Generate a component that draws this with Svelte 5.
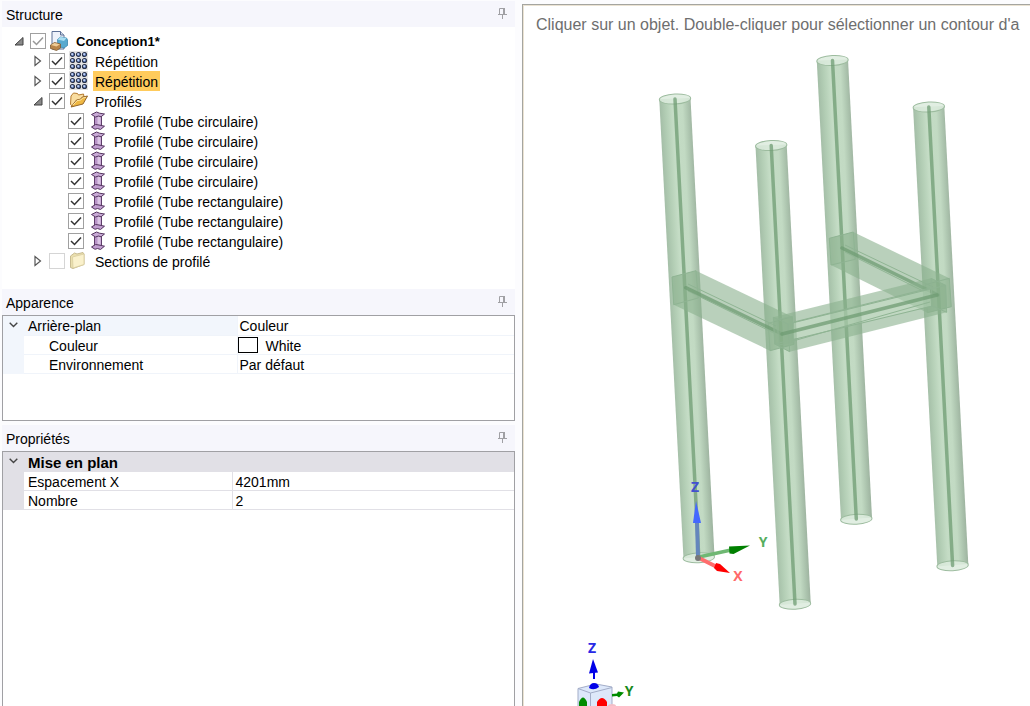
<script lang="ts">
  type IconName = "design" | "pattern" | "folder" | "beam" | "folder-closed";

  interface TreeNode {
    id: string;
    label: string;
    icon: IconName;
    depth: number;
    state?: "open" | "closed";
    checked: boolean;
    look?: "partial" | "off";
  }

  interface Property {
    name: string;
    value: string;
    swatch?: string;
  }

  const profiles = [
    "Profilé (Tube circulaire)",
    "Profilé (Tube circulaire)",
    "Profilé (Tube circulaire)",
    "Profilé (Tube circulaire)",
    "Profilé (Tube rectangulaire)",
    "Profilé (Tube rectangulaire)",
    "Profilé (Tube rectangulaire)",
  ];

  let nodes = $state<TreeNode[]>([
    { id: "root", label: "Conception1*", icon: "design", depth: 0, state: "open", checked: true, look: "partial" },
    { id: "rep1", label: "Répétition", icon: "pattern", depth: 1, state: "closed", checked: true },
    { id: "rep2", label: "Répétition", icon: "pattern", depth: 1, state: "closed", checked: true },
    { id: "profiles", label: "Profilés", icon: "folder", depth: 1, state: "open", checked: true },
    ...profiles.map((label, i): TreeNode => ({ id: `p${i}`, label, icon: "beam", depth: 2, checked: true })),
    { id: "sections", label: "Sections de profilé", icon: "folder-closed", depth: 1, state: "closed", checked: false, look: "off" },
  ]);

  let selected = $state("rep2");

  const visible = $derived(
    nodes.filter((node, i) => {
      if (node.depth === 0) return true;
      for (let d = node.depth - 1, j = i; d >= 0; d--) {
        while (nodes[j].depth !== d) j--;
        if (nodes[j].state === "closed") return false;
      }
      return true;
    }),
  );

  function toggle(node: TreeNode) {
    node.state = node.state === "open" ? "closed" : "open";
  }

  const appearance: Property[] = [
    { name: "Couleur", value: "White", swatch: "white" },
    { name: "Environnement", value: "Par défaut" },
  ];

  const properties: Property[] = [
    { name: "Espacement X", value: "4201mm" },
    { name: "Nombre", value: "2" },
  ];

  // Top centre of each circular tube, back to front
  const tubes = [
    [832.5, 60.5],
    [928.8, 107],
    [675, 99],
    [771.2, 145.5],
  ];

  // Rectangular tubes: near face, far face and neutral axis
  const beams = [
    {
      outline: "829.3,238.3 853.3,232 949.3,278.3 951.3,306.7 927.3,312.7 831,265",
      faces: ["829.3,238.3 853.3,232 855.3,259.3 831,265", "949.3,278.3 951.3,306.7 927.3,312.7 925.3,284.7"],
      edges: "M845 245 933 287M845 252 931 295",
      axis: "M842 248 938 295",
    },
    {
      outline: "672,277 696,270.7 792.3,316.7 794,344.3 770,350.7 673.7,304.7",
      faces: ["672,277 696,270.7 698.3,298 673.7,304.7", "792.3,316.7 794,344.3 770,350.7 768.3,323.3"],
      edges: "M688 284 776 326M688 291 774 333",
      axis: "M685.7 287.7 782 334",
    },
    {
      outline: "773.3,317.3 931,278.3 945.7,285.3 946.7,312.3 789.7,351.7 774.7,344",
      faces: ["773.3,317.3 788,324 789.7,351.7 774.7,344", "931,278.3 945.7,285.3 946.7,312.3 932.3,306", "777,319.5 792,316.8 793.5,342 779,345"],
      edges: "M788 324 945.7 285.3M774.7 344 932.3 306M794 322 930 288M793 341 930 302",
      axis: "M782 334 937 295",
      light: "794,323 930,289 931,306 793,339",
    },
  ];
</script>

{#snippet pin()}
  <button class="pin" aria-label="Épingler">
    <svg width="9" height="11" viewBox="0 0 9 11" aria-hidden="true">
      <path d="M1.5 6V.5h5V6M0 6.5h9M4.5 7v4" fill="none" stroke="#a0a0a4" />
      <path d="M5 0h2v6H5z" fill="#a0a0a4" />
    </svg>
  </button>
{/snippet}

{#snippet chevron()}
  <svg class="chevron" width="9" height="6" viewBox="0 0 9 6" aria-hidden="true">
    <path d="M.7.8 4.5 4.5 8.3.8" fill="none" stroke="#444" stroke-width="1.4" />
  </svg>
{/snippet}

{#snippet icon(name: IconName)}
  <svg class="icon" width="20" height="20" viewBox="0 0 20 20" aria-hidden="true">
    {#if name === "design"}
      <path d="M2 .5h8.500L14 4v14H2z" fill="#eef2fa" stroke="#5d7096" />
      <path d="M10.500.5V4H14" fill="#cfd9e8" stroke="#5d7096" />
      <path d="m7.500 8.500 3-2.500 6 1 1 2v5.500L14 17l-6-1.500z" fill="#58aacf" stroke="#3a86ad" stroke-width=".8" />
      <path d="m7.500 8.500 3-2.500 6 1-2.500 3z" fill="#a9def2" />
      <path d="m.5 14 4-2.500 6 1.500v4l-4 2.500-6-2z" fill="#b98549" stroke="#7c5a34" stroke-width=".8" />
      <path d="m1 14 3.500-2 5.500 1.200-3.500 2.300z" fill="#f0cd97" />
    {:else if name === "pattern"}
      <path d="M0 0h19v19H0z" fill="#e4e4e4" />
      {#each [3.5, 9.5, 15.5] as cy}
        {#each [3.5, 9.5, 15.5] as cx}
          <circle {cx} {cy} r="2" fill="#6f8fd0" stroke="#2b3348" stroke-width="1.200" />
          <circle cx={cx - 0.4} cy={cy - 0.4} r=".9" fill="#dce7ff" />
        {/each}
      {/each}
    {:else if name === "folder"}
      <path d="M1.500 13.500 2 5l2.500-3 4 .5 1 1.500 5-1 .5 3L4 15.500z" fill="#f9dda0" stroke="#b67b2e" />
      <path d="M2 16 7.500 9l4-.8 1.500-2 5.500-1.200-4.500 8z" fill="#efb843" stroke="#94652a" />
      <path d="m4 14.200 4-4.500 4-.8 1.500-1.800 3.500-.8" fill="none" stroke="#ffe6a3" />
    {:else if name === "folder-closed"}
      <path d="m1.500 5 4-3 2.500 1 6-1.500 1 1.500v10.500L4 17.500l-2.500-1z" fill="#eadfae" stroke="#c8bb91" />
      <path d="m3.500 6 11.500-3v10.500L4 17z" fill="#faf1cc" stroke="#d9ce9f" stroke-width=".8" />
    {:else}
      <path d="M6.500 5h7v10h-7z" fill="#b995c7" />
      <path d="M9.500 5.500h3V15h-3z" fill="#dcc6e6" />
      <path d="M6.500 5.500v9.500M13.500 5.500v8.500" stroke="#5f3d6b" />
      <path d="m3.500 3.500 5-2.500 3 1.200 5 .8-3.500 2.800-2.500-.8-3 1z" fill="#c9abd6" stroke="#54345f" />
      <path d="m3.500 16 4-2.500 3.500.5 5.500 1.200-4 3.300-3-1-2.500.8z" fill="#c19fd0" stroke="#54345f" />
    {/if}
  </svg>
{/snippet}

{#snippet rows(list: Property[])}
  {#each list as prop (prop.name)}
    <tr>
      <td class="gutter"></td>
      <th scope="row" class="name">{prop.name}</th>
      <td class="value">
        {#if prop.swatch}
          <span class="swatch"></span>
        {/if}{prop.value}
      </td>
    </tr>
  {/each}
{/snippet}

<div class="app">
  <aside class="sidebar">
    <section class="panel structure">
      <header>
        <h2>Structure</h2>
        {@render pin()}
      </header>
      <ul class="tree">
        {#each visible as node (node.id)}
          <li class="node depth-{node.depth}">
            {#if node.state}
              <button
                class="expander"
                aria-expanded={node.state === "open"}
                aria-label="Développer {node.label}"
                onclick={() => toggle(node)}
              >
                <svg width="10" height="12" viewBox="0 0 10 12" aria-hidden="true">
                  {#if node.state === "open"}
                    <path d="M9 2.500V10H1z" fill="#8a8a8a" stroke="#404040" />
                  {:else}
                    <path d="M2 1.500v9L7.500 6z" fill="#fff" stroke="#555" stroke-width="1.200" />
                  {/if}
                </svg>
              </button>
            {/if}
            <span class="check {node.look ?? ''}">
              <input type="checkbox" id="check-{node.id}" aria-label={node.label} bind:checked={node.checked} />
              {#if node.checked}
                <svg width="16" height="16" viewBox="0 0 16 16" aria-hidden="true">
                  <path d="m3 8 3.500 3.500L13 4.500" fill="none" stroke="currentColor" stroke-width="1.500" />
                </svg>
              {/if}
            </span>
            {@render icon(node.icon)}
            <button class="label" class:selected={selected === node.id} onclick={() => (selected = node.id)}>
              {node.label}
            </button>
          </li>
        {/each}
      </ul>
    </section>

    <section class="panel appearance">
      <header>
        <h2>Apparence</h2>
        {@render pin()}
      </header>
      <div class="grid">
        <table>
          <tbody>
            <tr class="group">
              <td class="gutter">{@render chevron()}</td>
              <th scope="row" class="name">Arrière-plan</th>
              <td class="value">Couleur</td>
            </tr>
            {@render rows(appearance)}
          </tbody>
        </table>
      </div>
    </section>

    <section class="panel properties">
      <header>
        <h2>Propriétés</h2>
        {@render pin()}
      </header>
      <div class="grid">
        <table>
          <tbody>
            <tr class="group">
              <td class="gutter">{@render chevron()}</td>
              <th scope="rowgroup" class="name">Mise en plan</th>
              <td class="value"></td>
            </tr>
            {@render rows(properties)}
          </tbody>
        </table>
      </div>
    </section>
  </aside>

  <main class="viewport">
    <p class="hint">Cliquer sur un objet. Double-cliquer pour sélectionner un contour d'a</p>
    <svg class="scene" viewBox="524 46 506 660" preserveAspectRatio="xMinYMin slice" role="img" aria-label="Modèle 3D">
      <defs>
        <linearGradient id="tube" gradientUnits="userSpaceOnUse" x1="-16" y1="0.8" x2="16" y2="-0.8">
          <stop offset="0" stop-color="#a3bda6" />
          <stop offset="0.2" stop-color="#b3ceb5" />
          <stop offset="0.4" stop-color="#c4dcc5" />
          <stop offset="0.72" stop-color="#c2dac3" />
          <stop offset="0.88" stop-color="#aec6b0" />
          <stop offset="1" stop-color="#a0b6a2" />
        </linearGradient>
      </defs>

      {#each tubes as [x, y]}
        <g transform="translate({x} {y})">
          <path d="M-15.700 1-15.500 0 15.500-1l24 458-31 2.500z" fill="url(#tube)" />
          <ellipse class="rim" rx="15.700" ry="5" transform="rotate(-3)" />
          <ellipse class="rim" cx="23.800" cy="458.700" rx="15.700" ry="5" transform="rotate(-3 23.800 458.700)" />
          <path d="m0 0 23.800 458.500" class="axis" />
        </g>
      {/each}

      {#each beams as beam}
        <polygon points={beam.outline} class="beam" />
        {#if beam.light}
          <polygon points={beam.light} fill="#d4ecd5" opacity=".3" />
        {/if}
        {#each beam.faces as face}
          <polygon points={face} class="face" />
        {/each}
        <path d={beam.edges} class="edge" />
        <path d={beam.axis} class="axis" />
      {/each}

      <g class="triad">
        <path d="M698 557 697 522" stroke="#6486bd" stroke-width="4" />
        <path d="m696 501 5 22h-8z" fill="#4468ff" />
        <path d="m699 557 32-7" stroke="#6fb873" stroke-width="3.500" />
        <path d="m750 545.500-21 1 .5 7 4 .5z" fill="#008000" />
        <path d="m699 558 18 9" stroke="#ff6d6d" stroke-width="4" />
        <path d="m730 573-10-9-4-1-2 5 3 3z" fill="#f00" />
        <circle cx="698" cy="558" r="3" fill="#777" />
        <text x="695" y="492" fill="#4350d0">Z</text>
        <text x="763" y="547" fill="#55ae5d">Y</text>
        <text x="738" y="581" fill="#ff6969">X</text>
      </g>

      <g class="triad">
        <path d="m578 688.500 18-4.500 16 3v25h-34z" fill="#dde8fa" stroke="#a3adc8" />
        <path d="m578 688.500 12.500 4.500 21.500-5.500M590.500 693v20" fill="none" stroke="#a3adc8" />
        <path d="M594 671v8" stroke="#0000e8" stroke-width="2" />
        <path d="m593 659 5 13.500-9 1z" fill="#0000e8" />
        <path d="M589 688q1-5 5-5t5 4q-5 4-10 1z" fill="#0000e8" />
        <path d="M579 706v-4q4-9 8 0v4z" fill="#008c00" />
        <path d="m612 694 5-.500 1-2 6 1-5 5-2-1.500-5 .500z" fill="#008c00" />
        <path d="M597 706v-4q5-8 10 0v4z" fill="#f00" />
        <ellipse cx="612" cy="706" rx="4" ry="2" fill="#f3bfc7" />
        <text x="592" y="653" fill="#2929e6">Z</text>
        <text x="629" y="696" fill="#198a19">Y</text>
      </g>
    </svg>
  </main>
</div>

<style>
  :global(body) {
    margin: 0;
  }

  .app {
    display: flex;
    height: 100vh;
    overflow: hidden;
    background: #fcfcfe;
    color: #000;
    font-family: "Liberation Sans", Arial, sans-serif;
    font-size: 14px;
  }

  button {
    padding: 0;
    border: 0;
    background: none;
    color: inherit;
    font: inherit;
  }

  .sidebar {
    display: flex;
    flex: 0 1 513px;
    flex-direction: column;
    margin: 1px 7px 0 2px;
    min-width: 0;
  }

  .panel {
    display: flex;
    flex-direction: column;
  }

  header {
    display: flex;
    flex: none;
    align-items: center;
    justify-content: space-between;
    height: 26px;
    padding: 0 8px 0 4px;
    background: #f6f6fc;
  }

  h2 {
    margin: 2px 0 0;
    font-size: 14px;
    font-weight: 400;
    line-height: 18px;
  }

  .pin {
    display: flex;
    margin-bottom: 2px;
  }

  .structure {
    padding-bottom: 18px;
    background: #fff;
  }

  .tree {
    margin: 0;
    padding: 4px 0 0;
    list-style: none;
  }

  .node {
    display: flex;
    align-items: center;
    height: 20px;
  }

  .depth-0 {
    padding-left: 12px;
  }

  .depth-1 {
    padding-left: 31px;
  }

  .depth-2 {
    padding-left: 66px;
  }

  .expander {
    display: flex;
    margin-right: 6px;
  }

  .check {
    display: grid;
    flex: none;
    width: 16px;
    height: 16px;
    margin-right: 4px;
    color: #333;
  }

  .check > * {
    grid-area: 1 / 1;
  }

  .check svg {
    pointer-events: none;
  }

  .check input {
    appearance: none;
    box-sizing: border-box;
    width: 16px;
    height: 16px;
    margin: 0;
    border: 1px solid #a0a0a0;
    background: #fff;
  }

  .check.partial {
    color: #999;
  }

  .check.off input {
    border-color: #d5d5d5;
  }

  .icon {
    flex: none;
  }

  .label {
    height: 20px;
    margin-left: 4px;
    padding: 2px 2px 0;
    line-height: 18px;
    white-space: nowrap;
  }

  .depth-0 .label {
    font-size: 13px;
    font-weight: 700;
  }

  .label.selected {
    background: #ffcb5c;
  }

  .grid {
    flex: 1;
    border: 1px solid #a0a0a4;
    background: #fff;
  }

  .appearance .grid {
    min-height: 104px;
  }

  .properties {
    flex: 1;
    margin-top: 4px;
  }

  .properties .grid {
    border-bottom: 0;
  }

  table {
    width: 100%;
    border-collapse: collapse;
    table-layout: fixed;
  }

  td,
  th {
    box-sizing: border-box;
    height: 19px;
    padding: 2px 0 0 4px;
    border-bottom: 1px solid #f0f4fa;
    font-weight: 400;
    line-height: 16px;
    text-align: left;
    white-space: nowrap;
  }

  .group > * {
    padding-top: 3px;
    line-height: 15px;
  }

  .gutter {
    width: 21px;
    padding: 0;
    border-color: #f2f6fc;
    background: #f2f6fc;
    text-align: center;
  }

  .chevron {
    display: block;
    margin: 0 6px;
  }

  .name {
    width: 213px;
  }

  .value {
    padding-left: 2px;
    border-left: 1px solid #f0f4fa;
  }

  .appearance .group .name {
    background: #f2f6fc;
  }

  .appearance tr:not(.group) .name {
    padding-left: 25px;
  }

  .swatch {
    display: inline-block;
    box-sizing: border-box;
    width: 20px;
    height: 16px;
    margin: -1px 8px -1px -2px;
    border: 1px solid #000;
    background: #fff;
    vertical-align: top;
  }

  .properties td,
  .properties th {
    border-color: #e1e0e6;
  }

  .properties .name {
    width: 208px;
  }

  .properties .value {
    padding-left: 3px;
  }

  .properties .gutter,
  .properties .group > * {
    background: #e1e0e6;
  }

  .properties .group .name {
    font-size: 15px;
    font-weight: 700;
  }

  .viewport {
    display: flex;
    flex: 1 1 0;
    flex-direction: column;
    min-width: 0;
    margin-top: 4px;
    border-top: 1px solid #a5a5a0;
    border-left: 1px solid #a5a5a0;
    background: #fff;
    box-shadow: inset 1px 1px #ebe3d3;
  }

  .hint {
    flex: none;
    height: 31px;
    margin: 0;
    padding: 10px 0 0 13px;
    overflow: hidden;
    color: #6e6e6e;
    font-size: 16px;
    line-height: 20px;
    white-space: nowrap;
  }

  .scene {
    flex: 1;
    min-height: 0;
    margin-left: 1px;
  }

  .rim {
    fill: #dcebdd;
    fill-opacity: 0.85;
    stroke: #9dbc9f;
  }

  .axis {
    fill: none;
    stroke: #6f9c73;
    stroke-linecap: round;
    stroke-opacity: 0.75;
    stroke-width: 3.5px;
  }

  .beam {
    fill: #8ab08d;
    fill-opacity: 0.6;
  }

  .face {
    fill: #8ab08d;
    fill-opacity: 0.1;
    stroke: #8fb493;
    stroke-width: 1px;
  }

  .edge {
    fill: none;
    stroke: #8fb493;
    stroke-width: 1px;
  }

  .triad text {
    font-family: "Open Sans", "Noto Sans", sans-serif;
    font-size: 14px;
    font-weight: 700;
    text-anchor: middle;
  }
</style>
